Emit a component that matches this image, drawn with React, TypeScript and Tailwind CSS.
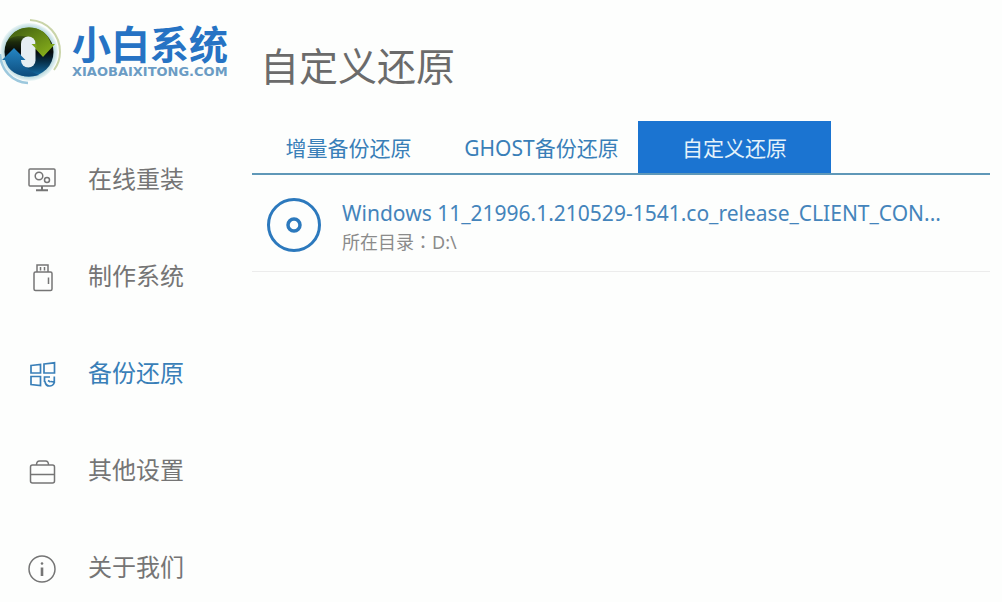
import React from "react";

const LogoMark = () => (
  <svg className="h-17 w-16 shrink-0" viewBox="0 0 64 68" fill="none" aria-hidden="true">
    <defs>
      <linearGradient id="mark-green" x1="0" y1="0" x2="1" y2="1">
        <stop offset="0" stopColor="#3c5a10" />
        <stop offset="1" stopColor="#8fb81c" />
      </linearGradient>
      <linearGradient id="mark-ring" x1="0" y1="0" x2="0" y2="1">
        <stop offset="0" stopColor="#6b9420" />
        <stop offset="0.3" stopColor="#1c2a0c" />
        <stop offset="0.5" stopColor="#050a0c" />
        <stop offset="0.7" stopColor="#07304a" />
        <stop offset="1" stopColor="#1672ae" />
      </linearGradient>
      <linearGradient id="mark-blue" x1="0" y1="0" x2="0" y2="1">
        <stop offset="0" stopColor="#2586c4" />
        <stop offset="1" stopColor="#0d4c7c" />
      </linearGradient>
      <radialGradient id="mark-halo">
        <stop offset="0.8" stopColor="#a9cfd6" />
        <stop offset="1" stopColor="#edf7f7" />
      </radialGradient>
    </defs>
    <circle cx="29" cy="34" r="29" fill="url(#mark-halo)" />
    <path d="M30 2C48 3 60 17 60 34c0 8-3 14-6 18" stroke="#c9d4a8" strokeWidth="2" />
    <path d="M0 36c1 16 12 28 28 29" stroke="#9cc8dd" strokeWidth="2.500" />
    <circle cx="29" cy="34" r="24.500" fill="url(#mark-ring)" />
    <path d="M9 21C14 12 22 9.500 29 9.500c11 0 19 6 22 16.500h4L43 39 31 26h5c-4-8-17-11-27-5Z" fill="url(#mark-green)" />
    <path d="M2 42 14 30l12 12h-3c2 8 8 12 16 15-14 4-30 0-34-15Z" fill="url(#mark-blue)" />
    <rect x="21" y="18.500" width="14.500" height="31" rx="7.200" fill="#e6eef2" />
    <path d="M31.500 26h5v5Z" fill="#7ca51c" />
    <path d="m20.500 37 5 5h-5Z" fill="#176da6" />
  </svg>
);

const MonitorIcon = () => (
  <svg className="mt-1 size-7" viewBox="0 0 28 28" fill="none" stroke="currentColor" strokeWidth="1.500" aria-hidden="true">
    <rect x="1" y="2" width="26" height="17" rx="1" />
    <circle cx="11" cy="9" r="3.800" />
    <circle cx="19" cy="13" r="2.500" />
    <path d="M14 19v4M8 23.200h12" strokeWidth="2" />
  </svg>
);

const UsbIcon = () => (
  <svg className="mt-1 size-7" viewBox="0 0 28 28" fill="none" stroke="currentColor" strokeWidth="1.500" aria-hidden="true">
    <rect x="6" y="8" width="18" height="18.500" rx="1.500" />
    <path d="M9 8V1h11v7M12.500 3v3.500M16.500 3v3.500M20.500 13.500v6.500" />
  </svg>
);

const BackupIcon = () => (
  <svg className="mt-1 size-7" viewBox="0 0 28 28" fill="none" stroke="currentColor" strokeWidth="1.700" aria-hidden="true">
    <path d="M3 4.500 12.500 3.500V12H3ZM16 3l10.500-1.200V12H16ZM3 15.500h9.500v9L3 23.500Z" />
    <path d="M16.500 21v-5H22M17 20.500c.5 3 2.500 4.700 5 4.500 2.500-.2 4-1.700 4.300-4M26.300 15.500V21l-3.500-.5M20 19.500l2.500 1.500" />
  </svg>
);

const BriefcaseIcon = () => (
  <svg className="mt-1 size-7" viewBox="0 0 28 28" fill="none" stroke="currentColor" strokeWidth="1.500" aria-hidden="true">
    <rect x="2.500" y="7" width="24" height="18" rx="2" />
    <path d="M8.500 7c0-3 1-4 3-4h6c2 0 3 1 3 4M2.500 16.500h24" />
  </svg>
);

const InfoIcon = () => (
  <svg className="mt-1 size-7" viewBox="0 0 28 28" fill="none" stroke="currentColor" strokeWidth="1.500" aria-hidden="true">
    <circle cx="14" cy="14" r="13" />
    <path d="M14 12.500V21" strokeWidth="2.600" />
    <circle cx="14" cy="8.500" r="1.300" fill="currentColor" stroke="none" />
  </svg>
);

const DiscIcon = () => (
  <svg className="size-14 shrink-0" viewBox="0 0 56 56" fill="none" stroke="#2c79bd" strokeWidth="3" aria-hidden="true">
    <circle cx="28" cy="28" r="25.500" />
    <circle cx="28" cy="28" r="6" strokeWidth="3.500" />
  </svg>
);

const navItems = [
  { label: "在线重装", Icon: MonitorIcon, active: false },
  { label: "制作系统", Icon: UsbIcon, active: false },
  { label: "备份还原", Icon: BackupIcon, active: true },
  { label: "其他设置", Icon: BriefcaseIcon, active: false },
  { label: "关于我们", Icon: InfoIcon, active: false },
];

const tabs = [
  { label: "增量备份还原", active: false },
  { label: "GHOST备份还原", active: false },
  { label: "自定义还原", active: true },
];

export default function App() {
  return (
    <div className="flex min-h-screen bg-[#fdfefd] font-['Noto_Sans','Noto_Sans_CJK_SC',sans-serif] text-[#757575]">
      <aside className="w-63 shrink-0">
        <a href="#home" className="flex h-[130px] items-start gap-2 pt-[18px]">
          <LogoMark />
          <span className="flex flex-col pt-1 text-[#2673c4]">
            <span className="text-[39px] leading-11 font-bold whitespace-nowrap">小白系统</span>
            <span className="font-['DejaVu_Sans',sans-serif] text-[13px] leading-3 font-bold text-[#6b9cc4]">
              XIAOBAIXITONG.COM
            </span>
          </span>
        </a>
        <nav>
          {navItems.map(({ label, Icon, active }) => (
            <a
              key={label}
              href="#section"
              aria-current={active ? "page" : undefined}
              className={
                active
                  ? "flex h-[97px] items-center gap-8 pl-7 text-2xl text-[#397fb8]"
                  : "flex h-[97px] items-center gap-8 pl-7 text-2xl"
              }
            >
              <Icon />
              {label}
            </a>
          ))}
        </nav>
      </aside>

      <main className="min-w-0 flex-1 pr-3">
        <h1 className="flex h-[121px] items-start pt-[42px] pl-2 text-[39px] leading-12 text-[#6b6b6b]">自定义还原</h1>
        <div role="tablist" className="flex h-[54px] border-b-2 border-[#5f98b8]">
          {tabs.map(({ label, active }) => (
            <button
              key={label}
              type="button"
              role="tab"
              aria-selected={active}
              className={
                active
                  ? "w-[193px] bg-[#1b74d1] pt-1 text-[21px] text-[#e4f2fa]"
                  : "w-[193px] pt-1 text-[21px] text-[#397fb8]"
              }
            >
              {label}
            </button>
          ))}
        </div>
        <ul>
          <li className="flex h-[97px] items-center gap-5 border-b border-[#ececec] pt-1 pl-3.5">
            <DiscIcon />
            <div className="min-w-0">
              <p className="truncate text-[21px] leading-8 text-[#4484bb]">
                Windows 11_21996.1.210529-1541.co_release_CLIENT_CON...
              </p>
              <p className="text-lg leading-6 text-[#8b8b8b]">
                所在目录<span className="font-['Noto_Sans_CJK_TC',sans-serif]" lang="zh-TW">：</span>D:\
              </p>
            </div>
          </li>
        </ul>
      </main>
    </div>
  );
}
